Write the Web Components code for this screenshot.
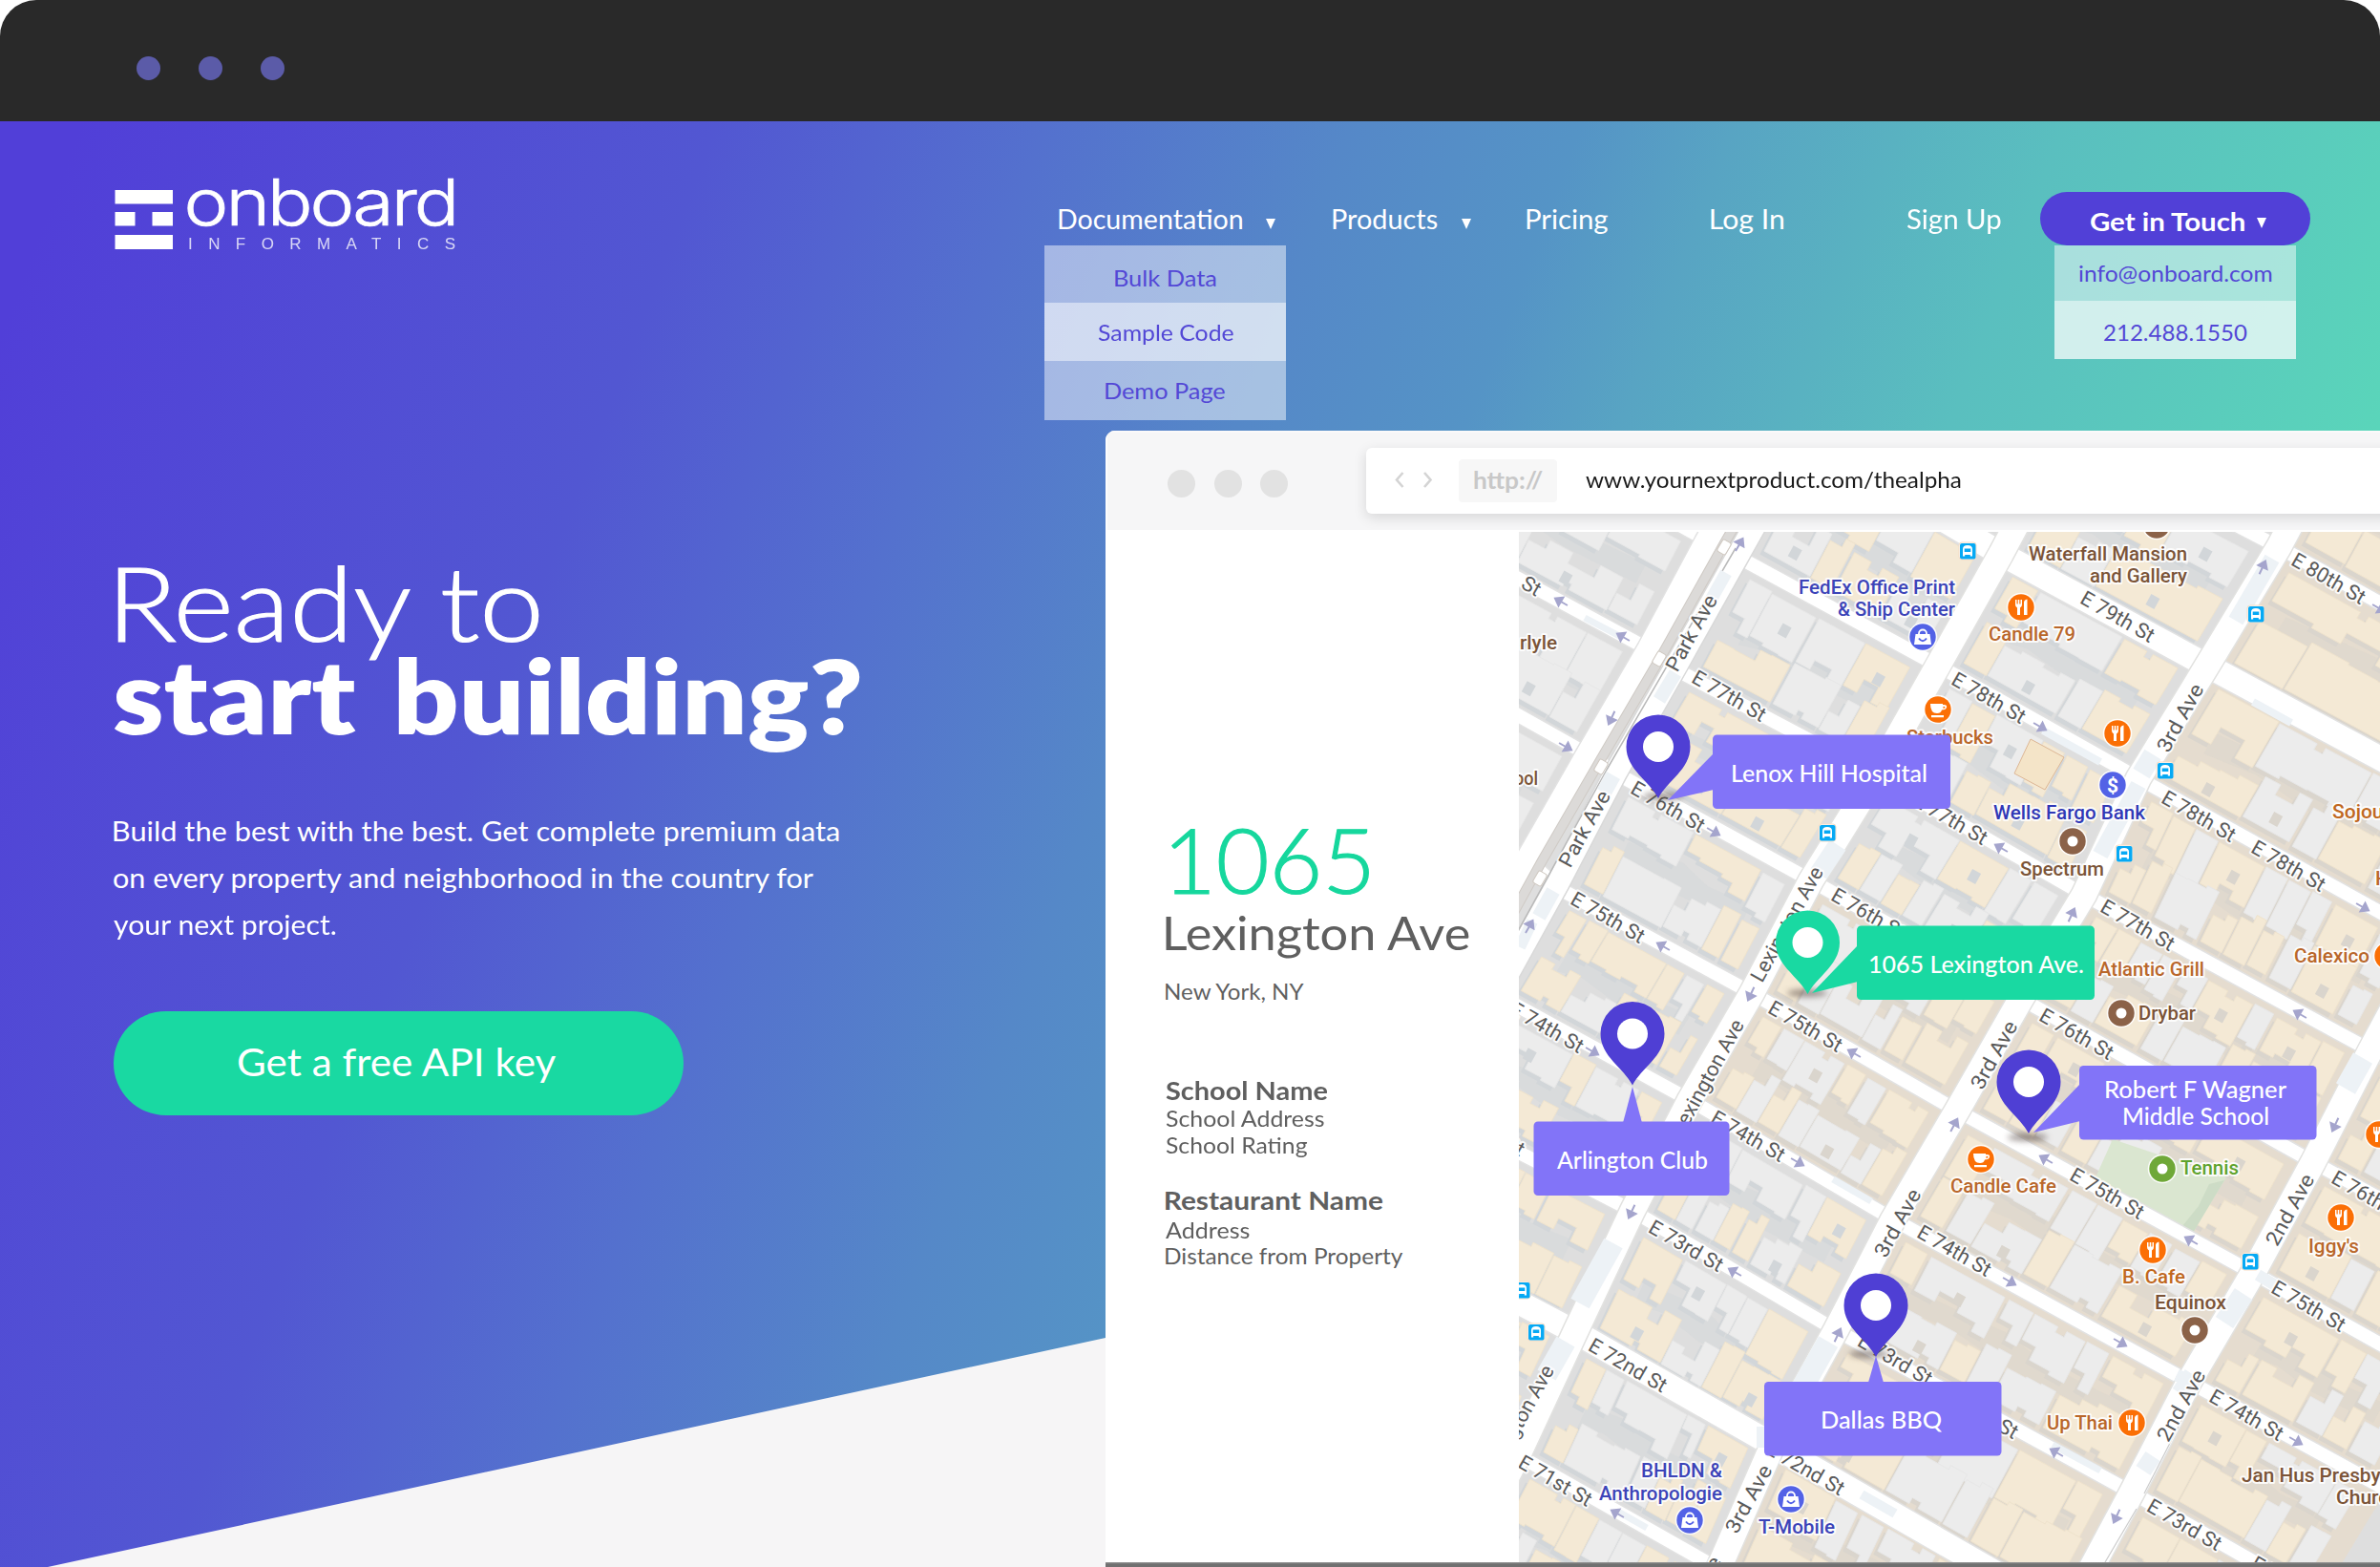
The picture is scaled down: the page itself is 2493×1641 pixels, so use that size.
<!DOCTYPE html>
<html lang="en">
<head>
<meta charset="utf-8">
<title>Onboard Informatics</title>
<style>
html,body{margin:0;padding:0;background:#fff}
body{width:2493px;height:1641px;overflow:hidden;font-family:Lato,"Open Sans",sans-serif}
</style>
</head>
<body>
<onboard-page></onboard-page>
<script>
const pen = document.createElement('canvas').getContext('2d');

/* One line of text whose drawn width is given by "w". */
class FitText extends HTMLElement {
  connectedCallback() {
    const size = +this.getAttribute('size'), w = +this.getAttribute('w');
    const weight = this.getAttribute('weight') || 400, h = this.getAttribute('h') || size;
    const space = this.getAttribute('space') || 0, stroke = this.getAttribute('stroke') || 0;
    const root = this.attachShadow({mode: 'open'});
    root.innerHTML = `<style>
      :host{display:block;flex:none;width:${w}px;height:${h}px;font-size:${size}px;font-weight:${weight};line-height:${size}px}
      span{display:inline-block;white-space:nowrap;transform-origin:0 0;word-spacing:${space}px;-webkit-text-stroke:${stroke}px currentColor}
    </style><span><slot></slot></span>`;
    pen.font = `${weight} ${size}px Lato, "Open Sans", sans-serif`;
    pen.wordSpacing = space + 'px';
    const m = pen.measureText(this.textContent.trim());
    const ink = m.actualBoundingBoxLeft + m.actualBoundingBoxRight, k = w / ink;
    root.querySelector('span').style.transform = `translateX(${m.actualBoundingBoxLeft * k}px) scaleX(${k})`;
  }
}
customElements.define('fit-text', FitText);

class WindowDots extends HTMLElement {
  connectedCallback() {
    this.attachShadow({mode: 'open'}).innerHTML = `<style>
      :host{display:flex;gap:var(--dot-gap)}
      i{width:var(--dot);height:var(--dot);border-radius:50%;background:var(--dot-color)}
    </style><i></i><i></i><i></i>`;
  }
}
customElements.define('window-dots', WindowDots);

class BrandLogo extends HTMLElement {
  connectedCallback() {
    this.attachShadow({mode: 'open'}).innerHTML = `<style>:host{display:block;width:357px;height:80px}svg{display:block;overflow:visible}</style>
    <svg width="357" height="80" viewBox="120 184 357 80" fill="#fff">
      <path d="M120.500 199h60.500v14.500h-60.500zM120.500 222h21v14.500h-21zM159.500 222h21.500v14.500h-21.500zM120.500 246h60.500v15h-60.500z"/>
      <text x="192.500" y="235.500" font-family="Inter" font-weight="300" font-size="67" letter-spacing="-2.500" stroke="#fff" stroke-width=".7" textLength="286" lengthAdjust="spacingAndGlyphs">onboard</text>
      <text x="197" y="260.500" font-family="Liberation Sans" font-size="17" textLength="280" opacity=".78">INFORMATICS</text>
    </svg>`;
  }
}
customElements.define('brand-logo', BrandLogo);

class NavItem extends HTMLElement {
  connectedCallback() {
    this.attachShadow({mode: 'open'}).innerHTML = `<style>
      :host{display:flex;position:relative;flex:none;align-items:flex-start;color:#fff;margin-top:87.500px}
      i{display:none;width:0;height:0;border:solid transparent;border-width:11px 5.500px 0;border-top-color:#fff;margin-top:14px;margin-left:var(--arrow-gap,25px)}
      :host([caret]) i{display:block}
    </style><slot></slot><i></i><slot name="menu"></slot>`;
  }
}
customElements.define('nav-item', NavItem);

class DropMenu extends HTMLElement {
  connectedCallback() {
    this.attachShadow({mode: 'open'}).innerHTML = `<style>
      :host{display:block;position:absolute;width:253px;color:#5348d6}
      ::slotted(div){display:flex;justify-content:center;box-sizing:border-box;background:rgba(255,255,255,.48)}
      ::slotted(div.light){background:rgba(255,255,255,.73)}
    </style><slot></slot>`;
  }
}
customElements.define('drop-menu', DropMenu);

class SiteHeader extends HTMLElement {
  connectedCallback() {
    this.attachShadow({mode: 'open'}).innerHTML = `<style>
      :host{display:flex;height:324px;align-items:flex-start;padding-left:120px;box-sizing:border-box;position:relative;z-index:2}
      brand-logo{margin-top:57px;flex:none}
      .touch{position:relative;display:flex;flex:none;align-items:flex-start;box-sizing:border-box;width:283px;height:56px;border-radius:28px;background:#5140d7;color:#fff;margin:74px 0 0 41px;padding:17px 0 0 53px;z-index:1}
      .touch i{width:0;height:0;border:solid transparent;border-width:11px 5px 0;border-top-color:#fff;margin:10px 0 0 12px}
      .contact{position:absolute;top:130px;left:2152px}
    </style>
    <brand-logo></brand-logo>
    <nav-item caret style="margin-left:632px"><fit-text w="192" size="28">Documentation</fit-text>
      <drop-menu slot="menu" style="left:-15px;top:42.500px">
        <div style="height:60px;padding-top:22px"><fit-text w="106" size="24">Bulk Data</fit-text></div>
        <div class="light" style="height:61px;padding-top:19px"><fit-text w="142" size="24">Sample Code</fit-text></div>
        <div style="height:62px;padding-top:19px"><fit-text w="125" size="24">Demo Page</fit-text></div>
      </drop-menu></nav-item>
    <nav-item caret style="margin-left:59.500px"><fit-text w="110" size="28">Products</fit-text></nav-item>
    <nav-item style="margin-left:58.500px"><fit-text w="85" size="28">Pricing</fit-text></nav-item>
    <nav-item style="margin-left:108px"><fit-text w="76" size="28">Log In</fit-text></nav-item>
    <nav-item style="margin-left:129px"><fit-text w="99" size="28">Sign Up</fit-text></nav-item>
    <div class="touch"><fit-text w="162" size="27" weight="700">Get in Touch</fit-text><i></i></div>
    <drop-menu class="contact">
      <div style="height:58px;padding-top:17px"><fit-text w="202" size="24">info@onboard.com</fit-text></div>
      <div class="light" style="height:61px;padding-top:21px"><fit-text w="150" size="24">212.488.1550</fit-text></div>
    </drop-menu>`;
  }
}
customElements.define('site-header', SiteHeader);

class HeroCopy extends HTMLElement {
  connectedCallback() {
    this.attachShadow({mode: 'open'}).innerHTML = `<style>
      :host{display:flex;flex-direction:column;align-items:flex-start;box-sizing:border-box;width:1158px;flex:none;padding:125px 0 0 119px;color:#fff}
      h1,p{margin:0;font-weight:400}
      p{margin-top:86px}
      .cta{margin-top:56px;box-sizing:border-box;width:597px;height:109px;border-radius:55px;background:#19d9a2;padding:33px 0 0 130px}
    </style>
    <h1><fit-text style="margin-left:5px" w="443" size="108" h="97" weight="300" stroke="1.2">Ready to</fit-text>
    <fit-text w="782" size="108" h="97" weight="800" space="10">start building?</fit-text></h1>
    <p><fit-text w="761" size="28" h="49">Build the best with the best. Get complete premium data</fit-text>
    <fit-text w="735" size="28" h="49">on every property and neighborhood in the country for</fit-text>
    <fit-text w="234" size="28" h="49">your next project.</fit-text></p>
    <div class="cta"><fit-text w="335" size="40">Get a free API key</fit-text></div>`;
  }
}
customElements.define('hero-copy', HeroCopy);

class PropertyPanel extends HTMLElement {
  connectedCallback() {
    this.attachShadow({mode: 'open'}).innerHTML = `<style>
      :host{display:block;flex:none;box-sizing:border-box;width:433px;background:#fff;padding:297px 0 0 63px;color:#5f5f5f}
      .n{color:#16d79d;margin-left:6px}
    </style>
    <fit-text class="n" w="207" size="95" weight="300" stroke="1.2">1065</fit-text>
    <fit-text style="margin-top:5px" w="319" size="49">Lexington Ave</fit-text>
    <fit-text style="margin-top:25px" w="146" size="24">New York, NY</fit-text>
    <fit-text style="margin-top:79px" w="170" size="26" weight="700">School Name</fit-text>
    <fit-text style="margin-top:4px" w="167" size="24">School Address</fit-text>
    <fit-text style="margin-top:4px" w="148" size="24">School Rating</fit-text>
    <fit-text style="margin-top:33px" w="228" size="26" weight="700">Restaurant Name</fit-text>
    <fit-text style="margin-top:6px" w="88" size="24">Address</fit-text>
    <fit-text style="margin-top:3px" w="249" size="24">Distance from Property</fit-text>`;
  }
}
customElements.define('property-panel', PropertyPanel);

/* Street map: blocks are quads between crossings, split into two rows of buildings. */
const CROSS = {
  81:[[1780,210],[1995,327],[2010,340],[2230,340],[2455,445],[2750,620],[2960,740]],
  80:[[1720,220],[1925,330],[1950,345],[2162,456],[2387,573],[2680,735],[2900,855]],
  79:[[1650,330],[1860,440],[1885,455],[2096,580],[2312,697],[2610,857],[2820,970]],
  78:[[1560,440],[1787,565],[1820,583],[2030,697],[2240,815],[2545,984],[2760,1100]],
  77:[[1500,557],[1727,680],[1757,702],[1965,812],[2183,937],[2483,1100],[2690,1210]],
  76:[[1450,670],[1663,790],[1693,810],[1897,922],[2117,1046],[2423,1217],[2620,1325]],
  75:[[1400,800],[1600,900],[1632,930],[1835,1040],[2050,1163],[2360,1333],[2560,1445]],
  74:[[1340,915],[1535,1020],[1565,1040],[1770,1152],[1983,1277],[2293,1447],[2500,1560]],
  73:[[1280,1030],[1475,1140],[1500,1160],[1710,1268],[1923,1393],[2233,1563],[2430,1675]],
  72:[[1220,1160],[1410,1265],[1435,1282],[1650,1395],[1857,1513],[2165,1690],[2360,1800]],
  71:[[1160,1280],[1350,1385],[1375,1405],[1590,1524],[1800,1643],[2100,1810],[2300,1920]],
  70:[[1100,1400],[1285,1500],[1310,1520],[1530,1640],[1740,1760],[2040,1925],[2240,2040]]};
const ROWS = {
  '80A':['ggg','ggg'],'80C':['ggcgg','cgccc'],'80D':['cccgg','ccccg'],'81D':['cc','cccccc'],
  '79B':['gcgc','ggcccgg'],'79C':['cgggcc','cggggcc'],'79D':['ccggggcc','cccgggccgc'],
  '78A':['ggg','cggggg'],'78B':['gggggcc','cccgggc'],'78C':['gcggccc','ggccccc'],'78D':['ccgccgggccg','ccggcccgccg'],
  '77A':['ccggg','gggggg'],'77B':['cccccg','cccccccc'],'77C':['gggccgg','cgcgggcc'],'77D':['ccgggccgccc','cgccgggcccc'],
  '76A':['ggg','ggg'],'76B':['gggcccg','cgggggcc'],'76C':['gggggcc','cggggccc'],'76D':['cccggccccc','ccgcgggccc'],'76E':['cccgg','ccgcgg'],
  '75B':['ccccccgc','ccggcccc'],'75C':['cgggcgcc','cgcggggc'],'75D':['cgggggcggc','cgggcggccc'],'75E':['ccccgg','cccgcg'],
  '74B':['gggcggc','ggccggcc'],'74C':['cgggggcc','cggccggcc'],'74D':['cgggggggcc','cggcgggccc'],'74E':['cccgggg','ccccgcg'],
  '73B':['ggcccc','ggcccc'],'73C':['ccggggcc','cccggccc'],'73D':['ccccggccc','cccgggccc'],'73E':['ccgg','ccggcc'],
  '72B':['ggcccc','ggccc'],'72C':['cgggggcc','cggggccc'],'72D':['ccggggcccg','ccggcc'],
  '71C':['cccggcc','gccgg']};
const COLS = {A:[0,1],B:[2,3],C:[3,4],D:[4,5],E:[5,6]};
let seed = 7;
const rnd = () => (seed = (seed * 16807) % 2147483647) / 2147483647;
const pts = a => a.map(p => p.map(n => n.toFixed(1)).join(',')).join(' ');

function blocks() {
  let out = '';
  for (let st = 81; st > 70; st--) for (const c in COLS) {
    const [l, r] = COLS[c], a = CROSS[st][l], b = CROSS[st][r], d = CROSS[st - 1][l], e = CROSS[st - 1][r];
    const at = (u, v) => [0, 1].map(i => (a[i]*(1-u)+b[i]*u)*(1-v) + (d[i]*(1-u)+e[i]*u)*v);
    const warm = c > 'C' || (c === 'C' && (st === 75 || st === 76));
    out += `<polygon points="${pts([at(0,0),at(1,0),at(1,1),at(0,1)])}" fill="${warm ? '#e5dccf' : '#dedede'}"/>`;
    const shade = warm ? '#dad5cd' : '#d2d6d9';
    const wide = Math.hypot(b[0]-a[0], b[1]-a[1]), mu = 22 / wide;
    const rows = ROWS[st + c] || ['cgggcc', 'cggggc'];
    let solids = '';
    /* yard between the two rows */
    out += `<polygon points="${pts([at(mu*2,.42),at(.45,.36),at(.6,.43),at(1-mu*2,.4),at(1-mu*2,.58),at(.5,.6),at(.3,.55),at(mu*2,.6)])}" fill="${shade}" opacity=".45"/>`;
    rows.forEach((codes, row) => {
      let u = mu; const step = (1 - 2*mu) / codes.length;
      for (let i = 0; i < codes.length; i++) {
        const code = codes[i]; let n = 1;
        while (codes[i+1] === code && n < 3 && rnd() < .62) { n++; i++; }
        const w = step * n, u1 = u + w, g = .003, gap = rnd() < .4 ? .012 : .003;
        const depth = .27 + rnd() * .15;
        const f = row ? .87 + rnd()*.02 : .13 - rnd()*.02, s = row ? -1 : 1;
        const shape = [at(u+g,f)];
        if (n > 1 && rnd() < .35) { const k = u + w*(.4+rnd()*.2); shape.push(at(k,f), at(k,f+s*.05), at(k+.03,f+s*.05), at(k+.03,f)); }
        shape.push(at(u1-gap,f));
        /* stepped back wall */
        const steps = n + 1; let x = u1 - gap, dv = depth;
        shape.push(at(x, f+s*dv));
        for (let q = 1; q < steps; q++) {
          const nx = u1 - w * (q / steps) + (rnd()-.5) * w * .12;
          shape.push(at(nx, f+s*dv));
          dv = depth - (rnd() < .5 ? rnd() * .17 : rnd() * .04);
          shape.push(at(nx, f+s*dv)); x = nx;
        }
        shape.push(at(u+g, f+s*dv));
        out += `<polygon points="${pts(shape.map(p => [p[0]-4.5, p[1]+3.5]))}" fill="${shade}"/>`;
        const col = code === 'c' ? '#f4e9d5' : '#ececec';
        solids += `<polygon points="${pts(shape)}" fill="${col}" stroke="${code === 'c' ? '#efe3cd' : '#e7e7e7'}" stroke-width="1"/>`;
        if (n > 1 && rnd() > .55) { const p = at(u+w*.45, f+s*depth*.4); solids += `<path d="M${p[0]} ${p[1]}l9 5-6 11-9-5z" fill="${shade}"/>`; }
        u = u1;
      }
    });
    out += solids;
  }
  return out;
}

function roads() {
  let out = '';
  const line = (p, w, col) => `<polyline points="${pts(p)}" fill="none" stroke="${col}" stroke-width="${w}" stroke-linejoin="round"/>`;
  for (let st = 81; st >= 70; st--) {
    const w = st === 79 || st === 72 ? 25 : 14;
    out += line(CROSS[st], w + 3, '#e2e2e2') + line(CROSS[st], w, '#fff');
  }
  const ave = i => Object.keys(CROSS).sort((a, b) => b - a).map(k => CROSS[k][i]);
  [3,4,5].forEach(i => out += line(ave(i), 29, '#e2e2e0') + line(ave(i), 26, '#fff'));
  const pw = [[1860,440],[1787,568],[1727,680],[1663,790],[1600,900],[1535,1020]];
  const pe = [[1900,440],[1826,572],[1757,695],[1693,808],[1632,925],[1560,1055]];
  out += line(pw, 27, '#e2e2e2') + line(pw, 24, '#fff') + line(pe, 26, '#d9d9d9') + line(pe, 23, '#fff');
  const med = [[1882,440],[1808,566],[1742,684],[1677,795],[1615,902],[1550,1020]];
  out += line(med, 11, '#cfcac5') + line(med, 9, '#dcdad8');
  out += line([[1818,574],[1683,806],[1590,975]], 1.500, '#b9b9b9');
  [[1806,573],[1738,690],[1677,803],[1613,920]].forEach(p => out += `<rect x="-5" y="-7" width="10" height="14" rx="2" fill="#fff" stroke="#cfc8c0" transform="translate(${p}) rotate(30)"/>`);
  /* tinted stretches of road */
  const tint = (a, b, w) => line([a, b], w, '#edf2f6');
  out += tint([1808,600],[1790,632],13)+tint([1755,705],[1738,733],14)+tint([1690,812],[1680,830],16)+tint([1627,933],[1612,960],15)+tint([1605,965],[1592,992],12)
    + tint([1925,885],[1905,915],20)+tint([2380,585],[2342,650],17)+tint([2255,790],[2243,810],20)+tint([2240,822],[2200,895],17)
    + tint([2475,1108],[2457,1140],23)+tint([2350,1355],[2330,1385],22)+tint([2298,1440],[2285,1460],22)+tint([2255,1525],[2245,1540],18)
    + tint([1690,1302],[1655,1365],22)+tint([1640,1405],[1620,1440],22)+tint([1915,1405],[1885,1458],23)+tint([1850,1505],[1840,1505],22)
    + tint([2360,735],[2400,757],8)+tint([2140,765],[2200,798],8)+tint([1700,668],[1660,647],7)
    + tint([2200,1540],[2150,1513],7)+tint([1985,1585],[1950,1565],10)+tint([1920,1235],[1960,1258],7)+tint([2280,1440],[2302,1450],13)+tint([2365,1335],[2385,1347],12)+tint([1725,1600],[1695,1583],7);
  out += line([[2290,1478],[2246,1564]], 1.200, '#ccc') + line([[2238,1580],[2205,1636]], 1.200, '#ccc');
  return out;
}

const arrow = (x, y, r) => `<path d="M-8 0H5M0-5 7 0 0 5z" fill="#a5a5cd" stroke="#a5a5cd" stroke-width="2" transform="translate(${x} ${y}) rotate(${r})"/>`;
const bus = (x, y) => `<g transform="translate(${x} ${y})"><rect x="-9" y="-9" width="18" height="18" rx="3" fill="#fff" stroke="#f7dcc4" stroke-width="1"/><rect x="-8" y="-8" width="16.500" height="16.500" rx="2" fill="#06a9f4"/><path d="M-5 5.500V-2q0-4 5-4t5 4v7.500H2.800V4h-5.600v1.500z" fill="#fff"/><path d="M-3.300-2.500h6.600V1h-6.600z" fill="#06a9f4"/></g>`;
const glyph = {
  fork: '<path d="M-6-8v5q0 3 2 3.500V8h3V.500q2-.5 2-3.500v-5H-.500v4.500H-1.700V-8h-1.600v4.500h-1.200V-8zM3 8V-5q0-3 3.500-3.500V8z" fill="#fff"/>',
  cup: '<path d="M-8-6H5v1q5-.5 4 3-1 2.500-5 2.500Q3 4-1 4-8 4-8-6zM5.500-3.300v2.200q2-.2 2-1.200t-2-1zM-7 6H6v2.200H-7z" fill="#fff"/>',
  bag: '<path d="M-4-2.500v-1a4 4 0 0 1 8 0v1" fill="none" stroke="#fff" stroke-width="1.800"/><path d="M-7.500-3h15L9 8H-9z" fill="#fff"/><path d="M-4 1.500q4 5.500 8 0" fill="none" stroke="#5362e6" stroke-width="2"/>',
  cash: '<text y="7.500" text-anchor="middle" font-family="Roboto" font-weight="700" font-size="21" fill="#fff">$</text>',
  dot: '<circle r="5.500" fill="#fff"/>'};
const poi = (x, y, col, g) => `<g transform="translate(${x} ${y})"><circle r="15.300" fill="#fff" opacity=".85"/><circle r="13.700" fill="${col}"/>${glyph[g]}</g>`;
const OR = '#fb6f05', BR = '#8b6248', BL = '#5362e6';
const name = (x, y, w, t, col) => `<text x="${x}" y="${y}" font-size="21" font-weight="500" fill="${col}" ${w ? `textLength="${w}" lengthAdjust="spacingAndGlyphs"` : ''} class="halo">${t}</text>`;
/* road name centred on a point */
const road = (x, y, t, r = 30, w = 0) => `<text transform="translate(${x} ${y}) rotate(${r})" y="7" text-anchor="middle" font-size="21.500" fill="#5a5a5a" ${w ? `textLength="${w}" lengthAdjust="spacingAndGlyphs"` : ''} class="halo">${t}</text>`;
const pin = (x, y, col = '#4f3fd4') => `<path d="M${x} ${y+54}C${x-9} ${y+36} ${x-33.500} ${y+24} ${x-33.500} ${y}a33.500 33.500 0 0 1 67 0C${x+33.500} ${y+24} ${x+9} ${y+36} ${x} ${y+54}z" fill="${col}"/><circle cx="${x}" cy="${y}" r="16" fill="#fff"/>`;
const shadow = (x, y) => `<ellipse cx="${x}" cy="${y}" rx="21" ry="4" fill="#53453f" opacity=".55" filter="url(#soft)"/>`;
const bubble = (x, y, w, tail, col = '#8274f8') => `<path d="${tail}" fill="${col}"/><rect x="${x}" y="${y}" width="${w}" height="77.500" rx="4.500" fill="${col}"/>`;
const tag = (x, y, w, t) => `<text x="${x}" y="${y}" font-family="Lato,sans-serif" font-weight="500" font-size="24" fill="#fff" textLength="${w}" lengthAdjust="spacingAndGlyphs">${t}</text>`;

class StreetMap extends HTMLElement {
  connectedCallback() {
    const A = -61;
    this.attachShadow({mode: 'open'}).innerHTML = `<style>
      :host{display:block;width:902px;height:1079px;margin-top:2px;overflow:hidden}
      svg{display:block}
      .halo{paint-order:stroke;stroke:#fff;stroke-opacity:.85;stroke-width:4px;stroke-linejoin:round}
    </style>
    <svg width="902" height="1079" viewBox="1591 557 902 1079" font-family="Roboto,sans-serif">
      <defs><filter id="soft" x="-50%" y="-150%" width="200%" height="400%"><feGaussianBlur stdDeviation="3"/></filter></defs>
      <rect x="1591" y="557" width="902" height="1079" fill="#dedede"/>
      ${blocks()}
      <path d="M2213 1193 2332 1233 2297 1291 2195 1233z" fill="#dae6d0"/><path d="M2314 1240 2330 1236 2297 1291 2286 1284 2303 1263z" fill="#cddcc6"/>
      <path d="M2127 774 2162 793 2142 827 2110 810z" fill="#f4e4c8" stroke="#ddb795"/>
      ${roads()}
      ${[[1635,630,210],[1700,667,210],[1688,752,115],[1640,782,30],[1822,570,-60],[1795,871,30],[2370,594,-65],[2137,761,30],[2096,888,210],[2475,950,30],
        [1602,970,-60],[1742,991,210],[1834,1041,115],[1668,1101,30],[1942,1103,210],[1883,1217,30],[2047,1178,-62],[1709,1269,115],[2170,958,-65],[2409,1062,210],
        [2446,1178,115],[2143,1214,210],[2295,1299,210],[1817,1332,210],[1925,1398,-65],[1694,1585,210],[2105,1342,30],[2221,1406,30],[2154,1521,210],[2217,1588,115],[2405,1509,30],[2492,637,30]].map(a => arrow(...a)).join('')}
      ${bus(2061,577)}${bus(2363,643)}${bus(1914,872)}${bus(2268,807)}${bus(2225,894)}${bus(1594,1351)}${bus(1609,1395)}${bus(2357,1321)}
      ${road(1604,614,'St')}${road(1811,729,'E 77th St')}${road(1747,845,'E 76th St')}${road(2218,646,'E 79th St')}${road(2083,731,'E 78th St')}
      ${road(2439,606,'E 80th St')}${road(2303,855,'E 78th St')}${road(2397,907,'E 78th St')}${road(2043,858,'E 77th St')}${road(1684,961,'E 75th St')}
      ${road(1957,957,'E 76th St')}${road(2239,969,'E 77th St')}${road(2175,1083,'E 76th St')}${road(1891,1075,'E 75th St')}${road(1620,1076,'E 74th St')}
      ${road(1831,1190,'E 74th St')}${road(2207,1250,'E 75th St')}${road(2481,1253,'E 76th St')}${road(1766,1305,'E 73rd St')}${road(2047,1310,'E 74th St')}
      ${road(1705,1430,'E 72nd St')}${road(1985,1424,'E 73rd St')}${road(2418,1368,'E 75th St')}${road(2353,1482,'E 74th St')}${road(2288,1597,'E 73rd St')}
      ${road(1891,1538,'E 72nd St')}${road(1629,1551,'E 71st St')}${road(2075,1480,'E 73rd St')}${road(2397,1657,'E 73rd St')}${road(1558,1184,'E 73rd St')}
      ${road(1772,663,'Park Ave',A,88)}${road(1660,868,'Park Ave',A,88)}${road(1872,968,'Lexington Ave',A,134)}${road(1789,1128,'Lexington Ave',A,134)}${road(1590,1490,'Lexington Ave',A,134)}
      ${road(2284,752,'3rd Ave',A,78)}${road(2089,1105,'3rd Ave',A,78)}${road(1988,1281,'3rd Ave',A,78)}${road(1832,1570,'3rd Ave',A,78)}${road(1779,1666,'3rd Ave',A,78)}
      ${road(2399,1267,'2nd Ave',A,82)}${road(2285,1472,'2nd Ave',A,82)}
      ${poi(2259,550,BR,'dot')}${poi(2014,667,BL,'bag')}${poi(2117,636,OR,'fork')}${poi(2218,768,OR,'fork')}${poi(2030,743,OR,'cup')}${poi(2213,822,BL,'cash')}${poi(2171,881,BR,'dot')}
      ${poi(2222,1061,BR,'dot')}${poi(2265,1224,'#6fa838','dot')}${poi(2075,1214,OR,'cup')}${poi(2452,1275,OR,'fork')}${poi(2492,1188,OR,'fork')}${poi(2501,1001,OR,'fork')}${poi(2255,1309,OR,'fork')}
      ${poi(2299,1393,BR,'dot')}${poi(2233,1490,OR,'fork')}${poi(1770,1592,BL,'bag')}${poi(1876,1570,BL,'bag')}
      ${name(1884,622,164,'FedEx Office Print','#3c44b8')}${name(1925,645,123,'&amp; Ship Center','#3c44b8')}
      ${name(2125,587,166,'Waterfall Mansion','#7b5438')}${name(2189,610,102,'and Gallery','#7b5438')}
      ${name(2083,671,91,'Candle 79','#b9672b')}${name(1997,779,91,'Starbucks','#b9672b')}${name(2088,858,159,'Wells Fargo Bank','#3038b6')}
      ${name(2116,917,88,'Spectrum','#7b5438')}${name(2443,857,0,'Sojourn','#c0681f')}${name(2488,927,0,'H','#b9672b')}${name(1592,680,39,'rlyle','#7b5438')}${name(1586,822,25,'ool','#7b5438')}
      ${name(2198,1022,111,'Atlantic Grill','#b9672b')}${name(2240,1068,60,'Drybar','#7b5438')}${name(2403,1008,79,'Calexico','#b9672b')}
      ${name(2284,1230,61,'Tennis','#5fa32e')}${name(2043,1249,111,'Candle Cafe','#b9672b')}${name(2223,1344,66,'B. Cafe','#c0681f')}${name(2418,1312,53,"Iggy's",'#b9672b')}
      ${name(2257,1371,75,'Equinox','#7b5438')}${name(2144,1497,69,'Up Thai','#b9672b')}
      ${name(1719,1547,85,'BHLDN &amp;','#3c44b8')}${name(1675,1571,129,'Anthropologie','#3c44b8')}${name(1842,1606,80,'T-Mobile','#3c44b8')}
      ${name(2348,1552,199,'Jan Hus Presbyterian','#7b5438')}${name(2447,1575,0,'Church','#7b5438')}
      ${shadow(1742,834)}${shadow(1893,1040)}${shadow(2124,1191)}${shadow(1958,1418)}
      ${bubble(1794,769.5,249,'M1747 838 1795 789v38z')}${pin(1737,782)}
      ${bubble(1945,969.5,249,'M1898 1040 1946 990v38z','#19d9a2')}${pin(1893.5,987,'#19d9a2')}
      ${bubble(1606.5,1174.5,205,'M1710 1138 1700 1176h20z')}${pin(1710,1082.5)}
      ${bubble(2178,1116,248.5,'M2130 1186 2179 1135v39z')}${pin(2125,1133)}
      ${bubble(1848,1447,248.5,'M1965 1420 1957 1448h16z')}${pin(1965,1367)}
      ${tag(1813,818.5,206,'Lenox Hill Hospital')}${tag(1957,1018.5,226,'1065 Lexington Ave.')}${tag(1631,1223.5,158,'Arlington Club')}
      ${tag(2204,1149.5,191,'Robert F Wagner')}${tag(2223,1177.5,154,'Middle School')}${tag(1907,1496,127,'Dallas BBQ')}
    </svg>`;
  }
}
customElements.define('street-map', StreetMap);

class BrowserWindow extends HTMLElement {
  connectedCallback() {
    this.attachShadow({mode: 'open'}).innerHTML = `<style>
      :host{display:flex;flex-direction:column;flex:1;min-width:0;background:#fff;border-radius:10px 0 0 0;overflow:hidden}
      .bar{flex:none;height:104px;background:#f6f6f7;display:flex;align-items:flex-start;box-sizing:border-box;border-top:2px solid #fbfafa;border-left:2px solid #fdfdfd;overflow:hidden}
      window-dots{--dot:29px;--dot-gap:19.500px;--dot-color:#e2e2e2;margin:38.500px 0 0 63px}
      .url{display:flex;align-items:flex-start;flex:1;box-sizing:border-box;height:69px;margin:16px -20px 0 82px;background:#fff;border-radius:6px;box-shadow:0 4px 14px rgba(0,0,0,.13);padding-left:29px;color:#1b1b1b}
      svg{margin-top:25px;flex:none}
      .chip{box-sizing:border-box;width:103px;height:45px;border-radius:4px;background:#f7f7f7;margin:12px 30px 0 26px;padding:10px 0 0 16px;color:#c8c8c8}
      .url>fit-text{margin-top:21px}
      .body{display:flex;flex:1;min-height:0}
      .base{flex:none;height:5px;background:linear-gradient(#999,#707070 40%)}
    </style>
    <div class="bar"><window-dots></window-dots>
      <div class="url"><svg width="42" height="17" fill="none" stroke="#d4d4d4" stroke-width="2.600"><path d="M9.500 1 3 8.500 9.500 16M32 1l6.500 7.500L32 16"/></svg>
        <div class="chip"><fit-text w="72" size="24" weight="700">http://</fit-text></div>
        <fit-text w="393" size="24">www.yournextproduct.com/thealpha</fit-text></div></div>
    <div class="body"><property-panel></property-panel><street-map></street-map></div>
    <div class="base"></div>`;
  }
}
customElements.define('browser-window', BrowserWindow);

class OnboardPage extends HTMLElement {
  connectedCallback() {
    this.attachShadow({mode: 'open'}).innerHTML = `<style>
      :host{display:flex;flex-direction:column;width:2493px;height:1641px;overflow:hidden}
      .top{flex:none;height:127px;box-sizing:border-box;background:#292929;border-radius:38px 38px 0 0;padding:58.500px 0 0 142.500px}
      .top window-dots{--dot:25px;--dot-gap:40.300px;--dot-color:#5b5ba8}
      .site{position:relative;isolation:isolate;flex:1;display:flex;flex-direction:column;min-height:0}
      .sky{position:absolute;inset:0;z-index:-1}
      .row{display:flex;flex:1;min-height:0}
    </style>
    <div class="top"><window-dots></window-dots></div>
    <div class="site">
      <svg class="sky" width="2493" height="1514" viewBox="0 127 2493 1514">
        <defs><linearGradient id="g" gradientUnits="userSpaceOnUse" x1="0" y1="0" x2="2328" y2="885">
          <stop offset=".05" stop-color="#513fd8"/><stop offset=".3" stop-color="#5257d2"/><stop offset=".43" stop-color="#5471ce"/><stop offset=".55" stop-color="#5588c8"/>
          <stop offset=".64" stop-color="#5594c6"/><stop offset=".7" stop-color="#58a4c3"/><stop offset=".83" stop-color="#5abfbf"/><stop offset="1" stop-color="#5ad5ba"/>
        </linearGradient></defs>
        <rect y="127" width="2493" height="1514" fill="url(#g)"/><path d="M50 1641 1158 1401H2493V1641z" fill="#f6f5f6"/>
      </svg>
      <site-header></site-header>
      <div class="row"><hero-copy></hero-copy><browser-window></browser-window></div>
    </div>`;
  }
}
customElements.define('onboard-page', OnboardPage);
</script>
</body>
</html>
